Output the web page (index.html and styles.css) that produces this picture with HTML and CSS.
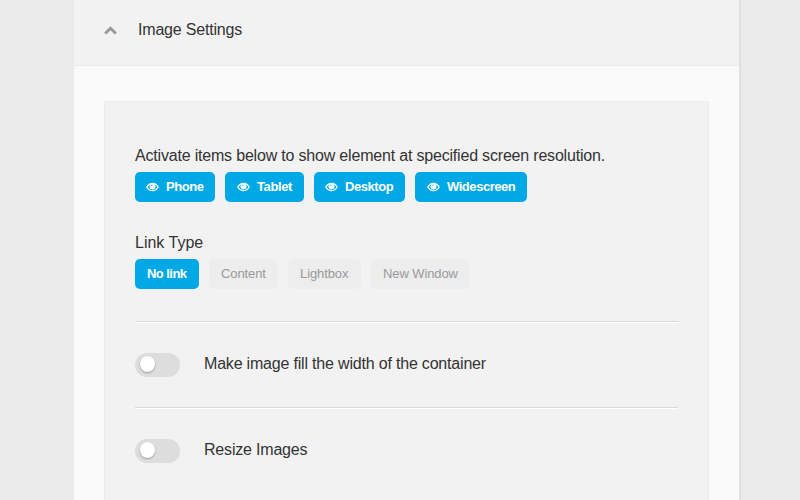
FILE: index.html
```
<!DOCTYPE html>
<html lang="en">
<head>
<meta charset="utf-8">
<title>Image Settings</title>
<link rel="stylesheet" href="styles.css">
</head>
<body>
<svg class="defs" width="0" height="0" aria-hidden="true">
  <symbol id="eye" viewBox="0 0 13 10">
    <path fill="none" stroke="#fff" stroke-width="1.300" d="M.8 5C2.200 2.600 4.100 1.300 6.500 1.300S10.800 2.600 12.200 5C10.800 7.400 8.900 8.700 6.500 8.700S2.200 7.400.8 5Z"/>
    <circle cx="6.500" cy="4.400" r="3"/>
    <path fill="none" stroke="#00a8e6" stroke-width=".7" d="M4.900 4.300Q5 2.900 6.500 2.800"/>
  </symbol>
</svg>
<main class="panel">
  <header class="panel-header">
    <svg class="chevron" viewBox="0 0 13 9"><path d="M1.200 7.500 6.500 2.300 11.800 7.500"/></svg>
    <span class="title">Image Settings</span>
  </header>
  <section class="box">
    <div class="label intro">Activate items below to show element at specified screen resolution.</div>
    <div class="buttons">
      <button class="btn active phone"><svg class="eye"><use href="#eye"/></svg><span>Phone</span></button>
      <button class="btn active tablet"><svg class="eye"><use href="#eye"/></svg><span>Tablet</span></button>
      <button class="btn active desktop"><svg class="eye"><use href="#eye"/></svg><span>Desktop</span></button>
      <button class="btn active wide"><svg class="eye"><use href="#eye"/></svg><span>Widescreen</span></button>
    </div>
    <div class="label link-label">Link Type</div>
    <div class="buttons">
      <button class="btn active no-link">No link</button>
      <button class="btn content">Content</button>
      <button class="btn lightbox">Lightbox</button>
      <button class="btn window">New Window</button>
    </div>
    <div class="setting first"><span class="toggle"><i></i></span><span class="setting-name">Make image fill the width of the container</span></div>
    <div class="setting"><span class="toggle"><i></i></span><span class="setting-name">Resize Images</span></div>
  </section>
</main>
</body>
</html>
```
FILE: styles.css
```
* { box-sizing: border-box; }
body {
  margin: 0;
  height: 500px;
  overflow: hidden;
  background: #eaeaea;
  color: #333;
  font: 16px/20px "Liberation Sans", Arial, sans-serif;
}
.defs { display: block; }
.panel {
  width: 667px;
  height: 500px;
  margin-left: 74px;
  overflow: hidden;
  background: #fafafa;
  border-right: 2px solid #e0e0e0;
}
.panel-header {
  display: flex;
  height: 66px;
  padding: 20px 30px 0;
  background: #f2f2f2;
  border-bottom: 1px solid #ebebeb;
}
.title, .intro, .setting-name { letter-spacing: -0.19px; }
.chevron {
  width: 13px;
  height: 9px;
  margin: 6px 21px 0 0;
  fill: none;
  stroke: #999;
  stroke-width: 3;
}
.box {
  height: 440px;
  margin: 35px 30px 0;
  padding: 44px 30px 0;
  background: #f2f2f2;
  border: 1px solid #ececec;
  border-radius: 2px;
}
.label { height: 26px; white-space: nowrap; }
.link-label { margin-top: 31px; }
.buttons { display: flex; gap: 10px; }
.btn {
  display: flex;
  align-items: center;
  height: 30px;
  padding: 0 0 0 12px;
  border: 0;
  border-radius: 5px;
  background: #ededed;
  color: #999;
  font: 13px/20px "Liberation Sans", Arial, sans-serif;
  letter-spacing: -0.1px;
  white-space: nowrap;
}
.btn.active { background: #00a8e6; color: #fff; font-weight: bold; letter-spacing: -0.45px; }
.eye { flex: none; width: 13px; height: 10px; margin: 0 7px 0 -1px; fill: #fff; }
.phone { width: 80px; }
.btn.tablet { width: 79px; padding-left: 13px; letter-spacing: -0.4px; }
.desktop { width: 91px; }
.btn.wide { width: 112px; padding-left: 13px; }
.btn.no-link { width: 64px; letter-spacing: -0.55px; }
.content { width: 69px; }
.lightbox { width: 73px; }
.window { width: 98px; }
.setting {
  display: flex;
  height: 86px;
  padding-top: 30px;
  border-top: 1px solid #d9d9d9;
  box-shadow: inset 0 1px #fff;
}
.setting.first { margin-top: 32px; }
.setting-name { margin-top: 2px; }
.toggle {
  width: 45px;
  height: 24px;
  margin: 1px 24px 0 0;
  padding: 3px 0 0 4.5px;
  border-radius: 12px;
  background: #ddd;
}
.toggle i {
  display: block;
  width: 15px;
  height: 16px;
  border-radius: 50%;
  background: #fff;
  box-shadow: 0 1px 2px rgba(0, 0, 0, .3);
}
```
